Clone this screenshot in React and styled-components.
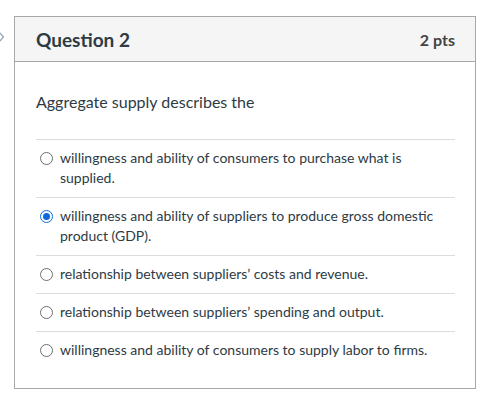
import React from 'react';
import styled, { createGlobalStyle } from 'styled-components';

const GlobalStyle = createGlobalStyle`
  body {
    margin: 0;
    background: #fff;
    font-family: Lato, "Noto Sans", sans-serif;
    color: #2d3b45;
  }
`;

const Page = styled.div`
  position: relative;
  padding: 16px 0 0 14px;
  width: 497px;
  height: 399px;
  box-sizing: border-box;
`;

const Chevron = styled.svg`
  position: absolute;
  left: -4px;
  top: 29px;
`;

const Card = styled.div`
  width: 462px;
  height: 373px;
  box-sizing: border-box;
  border: 1px solid #a8a8a8;
  display: flex;
  flex-direction: column;
`;

const Header = styled.div`
  height: 45px;
  box-sizing: border-box;
  background: #f5f5f5;
  border-bottom: 1px solid #a8a8a8;
  display: flex;
  align-items: center;
  justify-content: space-between;
  padding: 0 20px 0 21px;
`;

const Title = styled.h2`
  margin: 0;
  font-size: 19px;
  font-weight: 700;
  color: #2d3b45;
`;

const Points = styled.span`
  font-size: 16px;
  font-weight: 700;
  color: #444;
`;

const Body = styled.div`
  padding: 30px 20px 0 21px;
`;

const Prompt = styled.p`
  margin: 0 0 27px;
  font-size: 16px;
  line-height: 20px;
`;

const Answer = styled.label`
  display: flex;
  align-items: flex-start;
  gap: 7px;
  border-top: 1px solid #dcdcdc;
  padding: 8px 0 9px 4px;
  font-size: 14px;
  line-height: 20px;
`;

const Radio = styled.span`
  flex: none;
  box-sizing: border-box;
  width: 13px;
  height: 13px;
  margin-top: 4px;
  border-radius: 50%;
  border: 1px solid ${({ checked }) => (checked ? '#0b6bde' : '#6f6f6f')};
  display: flex;
  align-items: center;
  justify-content: center;
  &::after {
    content: '';
    width: 7px;
    height: 7px;
    border-radius: 50%;
    background: ${({ checked }) => (checked ? '#0b6bde' : 'transparent')};
  }
`;

const answers = [
  'willingness and ability of consumers to purchase what is supplied.',
  'willingness and ability of suppliers to produce gross domestic product (GDP).',
  'relationship between suppliers’ costs and revenue.',
  'relationship between suppliers’ spending and output.',
  'willingness and ability of consumers to supply labor to firms.'
];

const App = () => (
  <Page>
    <GlobalStyle />
    <Chevron width="9" height="16" viewBox="0 0 9 16">
      <path d="M1 1 L7.5 8 L1 15" fill="none" stroke="#8aa0b4" strokeWidth="1.2" />
    </Chevron>
    <Card>
      <Header>
        <Title>Question 2</Title>
        <Points>2 pts</Points>
      </Header>
      <Body>
        <Prompt>Aggregate supply describes the</Prompt>
        {answers.map((text, i) => (
          <Answer key={text}>
            <Radio checked={i === 1} />
            <span>{text}</span>
          </Answer>
        ))}
      </Body>
    </Card>
  </Page>
);

export default App;
